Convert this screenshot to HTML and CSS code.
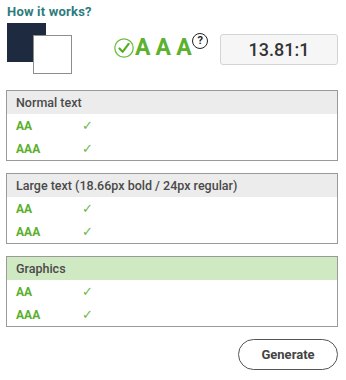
FILE: index.html
```html
<!DOCTYPE html>
<html>
<head>
<meta charset="utf-8">
<link rel="stylesheet" href="styles.css">
</head>
<body>
<div class="title">How it works?</div>
<div class="top">
  <div class="swatches">
    <div class="sw fg"></div>
    <div class="sw bg"></div>
  </div>
  <div class="badge">
    <svg class="okc" width="20" height="20" viewBox="0 0 20 20"><circle cx="10" cy="10" r="9.2" fill="none" stroke="#6fbe45" stroke-width="1.3"/><path d="M5.5 10.5 L8.6 13.8 L14.6 5.8" fill="none" stroke="#58ad2a" stroke-width="2.2" stroke-linecap="round" stroke-linejoin="round"/></svg>
    <span class="aaa">A A A</span>
    <span class="help">?</span>
  </div>
  <div class="ratio">13.81:1</div>
</div>

<div class="tbl">
  <div class="hd">Normal text</div>
  <div class="row"><span class="lv">AA</span><span class="ck">✓</span></div>
  <div class="row"><span class="lv">AAA</span><span class="ck">✓</span></div>
</div>
<div class="tbl">
  <div class="hd">Large text (18.66px bold / 24px regular)</div>
  <div class="row"><span class="lv">AA</span><span class="ck">✓</span></div>
  <div class="row"><span class="lv">AAA</span><span class="ck">✓</span></div>
</div>
<div class="tbl">
  <div class="hd green">Graphics</div>
  <div class="row"><span class="lv">AA</span><span class="ck">✓</span></div>
  <div class="row"><span class="lv">AAA</span><span class="ck">✓</span></div>
</div>
<div class="actions">
  <button class="gen">Generate</button>
</div>
</body>
</html>
```
FILE: styles.css
```css
html, body { background: #fff; }
body {
  margin: 0;
  padding: 4px 8px 0 6px;
  font-family: Roboto, "Liberation Sans", sans-serif;
  color: #444;
}
.title {
  margin-left: 1px;
  font-size: 13px;
  font-weight: 700;
  color: #2e7b7d;
  line-height: 15px;
  letter-spacing: 0.2px;
}
.top {
  display: flex;
  align-items: flex-start;
  margin-top: 4px;
  height: 55px;
}
.swatches {
  position: relative;
  width: 66px;
  height: 51px;
  margin-left: 1px;
}
.sw { position: absolute; width: 39px; height: 39px; box-sizing: border-box; }
.fg { left: 0; top: 0; background: #1e2a3f; }
.bg { left: 26px; top: 12px; background: #fff; border: 1px solid #8d8d8d; }
.badge {
  display: flex;
  align-items: flex-start;
  margin-left: 41px;
  margin-top: 10px;
}
.okc { margin-top: 5px; }
.aaa {
  margin-left: 1px;
  font-size: 23px;
  font-weight: 700;
  color: #5cb12e;
  line-height: 30px;
  letter-spacing: -0.3px;
}
.help {
  width: 14px;
  height: 14px;
  border: 1.3px solid #222;
  border-radius: 50%;
  font-size: 11px;
  font-weight: 700;
  line-height: 14px;
  text-align: center;
  color: #222;
  margin-left: 1px;
  margin-top: 0;
}
.ratio {
  margin-left: auto;
  margin-top: 11px;
  width: 118px;
  height: 31px;
  box-sizing: border-box;
  border: 1px solid #d4d4d4;
  border-radius: 3px;
  background: #f6f6f6;
  text-align: center;
  font-size: 18px;
  font-weight: 500;
  color: #333;
  line-height: 29px;
}
.tbl {
  border: 1px solid #9a9a9a;
  margin-top: 12px;
  width: 332px;
  box-sizing: border-box;
}
.hd {
  background: #ececec;
  height: 23px;
  line-height: 23px;
  padding-left: 9px;
  font-size: 12.5px;
  font-weight: 500;
  color: #4a4a4a;
}
.hd.green { background: #cfe9c3; }
.row {
  display: flex;
  align-items: center;
  height: 23px;
  padding-left: 9px;
}
.lv {
  width: 66px;
  font-size: 12px;
  font-weight: 700;
  color: #5aaf2c;
}
.ck {
  font-size: 13px;
  color: #6cb84a;
}
.actions {
  display: flex;
  justify-content: flex-end;
  margin-top: 12px;
}
.gen {
  width: 100px;
  height: 31px;
  border: 1px solid #555;
  border-radius: 16px;
  background: #fff;
  font-family: Roboto, "Liberation Sans", sans-serif;
  font-size: 13px;
  font-weight: 700;
  color: #444;
}
```
